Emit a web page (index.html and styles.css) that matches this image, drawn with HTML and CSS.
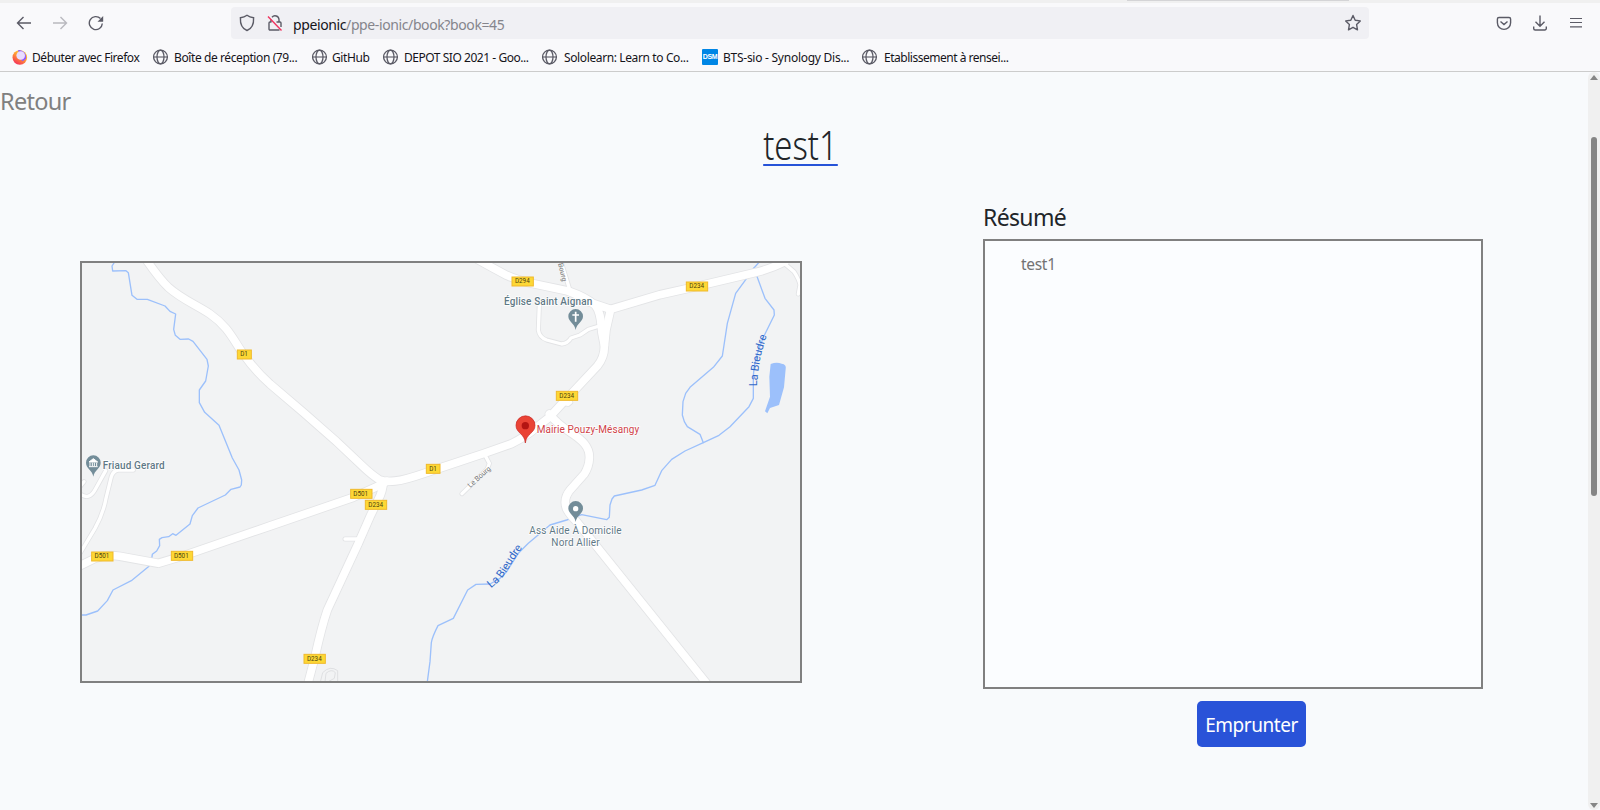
FILE: index.html
```html
<!DOCTYPE html>
<html lang="fr">
<head>
<meta charset="utf-8">
<title>test1</title>
<link rel="stylesheet" href="styles.css">
</head>
<body>
<svg class="defs" width="0" height="0">
  <symbol id="globe" viewBox="0 0 16 16"><g fill="none" stroke="#5b5b66" stroke-width="1.3"><circle cx="7.500" cy="8" r="6.9"/><ellipse cx="7.500" cy="8" rx="3.500" ry="6.9"/><path d="M.5 8h14" stroke-width="1.1"/></g></symbol>
</svg>
<div class="tabstrip"><div class="tab-edge"></div></div>
<header class="toolbar">
  <div class="nav">
    <svg width="16" height="16" viewBox="0 0 16 16"><path d="M15 8H1.5M7.5 2l-6 6 6 6" class="ink"/></svg>
    <svg class="faded" width="16" height="16" viewBox="0 0 16 16"><path d="M1 8h13.5M8.500 2l6 6-6 6" class="ink"/></svg>
    <svg width="16" height="16" viewBox="0 0 16 16"><path d="M14.300 8.500A6.500 6.500 0 1 1 12.500 3.600" class="ink"/><path d="M15.200 1v5.200a.5.5 0 0 1-.5.5H9.500z" fill="#5b5b66"/></svg>
  </div>
  <div class="urlbar">
    <svg width="16" height="18" viewBox="0 0 16 18"><path d="M8 1.300C10 2.800 12.500 3.500 14.600 3.700C14.900 9.500 13 14.500 8 16.500C3 14.500 1.100 9.500 1.400 3.700C3.500 3.500 6 2.800 8 1.300Z" class="ink"/></svg>
    <svg class="lock" width="16" height="18" viewBox="0 0 16 18"><path d="M4 8V5.500M5 3.200A4 4 0 0 1 12 5.500V8M9.500 8H13a1 1 0 0 1 1 1V13M12.500 16H3a1 1 0 0 1-1-1V9a1 1 0 0 1 1-1H4.500" class="ink"/><path d="M1 2.500L14.500 16.500" stroke="#f0325f" stroke-width="1.400"/></svg>
    <span class="url"><b>ppeionic</b>/ppe-ionic/book?book=45</span>
    <svg class="star" width="18" height="18" viewBox="0 0 18 18"><path d="M9 1.500L11.200 6.300L16.300 6.900L12.600 10.500L13.500 15.800L9 13.300L4.500 15.800L5.400 10.500L1.700 6.900L6.800 6.300Z" class="ink" stroke-linejoin="round"/></svg>
  </div>
  <div class="tools">
    <svg width="16" height="16" viewBox="0 0 16 16"><path d="M3 2.500h10a1.600 1.600 0 0 1 1.600 1.600V7.800a6.600 6.600 0 0 1-13.200 0V4.100A1.600 1.600 0 0 1 3 2.500ZM4.500 6.500L8 9.600L11.500 6.500" class="ink"/></svg>
    <svg width="16" height="16" viewBox="0 0 16 16"><path d="M8 .5V11M3.500 6.800L8 11.200l4.500-4.400M1.700 11.500v2a1.500 1.500 0 0 0 1.500 1.500h9.600a1.500 1.500 0 0 0 1.500-1.500v-2" class="ink"/></svg>
    <svg width="16" height="16" viewBox="0 0 16 16"><path d="M2 3.500h12M2 7.500h12M2 11.800h12" class="ink thin"/></svg>
  </div>
</header>
<nav class="bookmarks">
  <a class="bm w1"><svg width="16" height="16" viewBox="0 0 16 16"><defs><linearGradient id="ff" x1=".8" y1="0" x2=".2" y2="1"><stop offset="0" stop-color="#ffdf3c"/><stop offset=".45" stop-color="#ff9a35"/><stop offset="1" stop-color="#f5245d"/></linearGradient></defs><circle cx="7.800" cy="8.500" r="7.300" fill="url(#ff)"/><path d="M6 1.200a7 7 0 0 1 8 8a6 6 0 0 1-4 3z" fill="#9059ff"/><circle cx="8.700" cy="6.500" r="4.300" fill="#e9dcff"/></svg><span>Débuter avec Firefox</span></a>
  <a class="bm w2"><svg width="16" height="16"><use href="#globe"/></svg><span>Boîte de réception (79...</span></a>
  <a class="bm w3"><svg width="16" height="16"><use href="#globe"/></svg><span>GitHub</span></a>
  <a class="bm w4"><svg width="16" height="16"><use href="#globe"/></svg><span>DEPOT SIO 2021 - Goo...</span></a>
  <a class="bm w5"><svg width="16" height="16"><use href="#globe"/></svg><span>Sololearn: Learn to Co...</span></a>
  <a class="bm w6"><i class="dsm">DSM</i><span>BTS-sio - Synology Dis...</span></a>
  <a class="bm w7"><svg width="16" height="16"><use href="#globe"/></svg><span>Etablissement à rensei...</span></a>
</nav>
<div class="viewport">
  <main class="page">
    <a class="back">Retour</a>
    <h1 class="title"><span>test1</span></h1>
    <div class="columns">
      <svg class="map" viewBox="36 39 2154 1254">
        <defs>
          <g id="wide">
            <path d="M228 28C250 60 270 88 295 112C335 148 380 165 420 192C475 230 490 270 520 312C545 348 570 375 600 402L700 487L800 575L875 646Q905 675 928 689Q945 697 975 693C1020 688 1060 669 1110 654L1240 611L1325 581Q1370 558 1400 532L1440 500L1475 462L1510 425L1582 348Q1603 322 1603 290L1608 240L1622 178L1770 134L1860 114L1990 83L2050 69Q2100 58 2145 35"/>
            <path d="M1220 27Q1270 55 1310 76Q1340 90 1380 99L1490 122Q1530 137 1560 157L1622 178M1500 125Q1545 140 1575 165C1596 190 1592 225 1596 250L1603 285"/>
            <path d="M1438 492Q1465 525 1500 546C1540 572 1560 592 1558 625Q1557 650 1543 672L1502 718C1485 738 1482 758 1490 777Q1498 793 1520 815L1910 1300"/>
            <path d="M25 950L75 925Q110 912 150 919L265 940L335 919L600 828L850 742L925 708L950 694"/>
            <path d="M940 695Q938 725 925 748L900 800L865 880L772 1080Q755 1130 735 1220L714 1300"/>
          </g>
          <g id="narrow">
            <path d="M1470 25L1502 128M1408 165L1405 240Q1408 262 1430 270L1475 282Q1494 280 1503 264L1530 255L1555 238L1588 228"/>
            <path d="M1243 612L1258 640L1252 657L1176 731M1478 460L1495 463L1502 457M868 867H825M30 732Q58 752 76 718L107 662M30 910L75 835Q100 790 108 745L124 680Q130 662 145 660H190M30 710L42 695M2145 42L2172 65Q2188 90 2190 105L2185 132"/>
          </g>
          <path id="riverNameA" d="M2062 447V400Q2063 355 2077 300L2095 240"/>
          <path id="riverNameB" d="M1263 1015L1292 990Q1309 968 1328 935L1371 873"/>
        </defs>
        <rect x="36" y="39" width="2154" height="1254" fill="#f2f3f4"/>
        <g fill="none" stroke-linejoin="round" stroke-linecap="round">
          <g stroke="#9cc0fb" stroke-width="4">
            <path d="M132 39L126 48L128 63L168 62L175 68L186 136L201 148H232L285 168L300 184L317 192L311 238L316 256L330 268L356 267L369 274L411 328L415 348L407 393L388 420V458L404 487L447 526L487 624L507 660L515 690L514 705L510 711L483 718L466 735L384 774L367 797L360 822L318 856L308 851L296 860L276 863L268 868L269 887L260 903L247 913L245 927L237 949L184 992L129 1020L112 1052L83 1083L48 1095H30"/>
            <path d="M2067 37L2052 54L2025 92L1997 130L1972 220L1957 318L1930 352L1860 412L1847 430L1839 455L1837 495L1843 515L1852 530L1890 553L1900 578"/>
            <path d="M2052 54L2063 85L2085 145L2112 180L2113 195L2082 258Q2050 330 2050 380V445L2037 470L1980 530L1947 556L1900 578L1845 603L1805 628L1775 662L1755 706L1715 720L1633 738L1626 747L1620 765L1618 802L1610 809L1535 794L1490 810L1440 825L1375 880L1345 910L1310 965L1290 985L1260 1002L1218 1003L1193 1020L1150 1105L1104 1127Q1087 1160 1084 1178L1080 1235L1072 1295"/>
          </g>
          <use href="#narrow" stroke="#e2e3e5" stroke-width="15"/>
          <use href="#wide" stroke="#e3e4e6" stroke-width="28"/>
          <use href="#narrow" stroke="#fff" stroke-width="10"/>
          <use href="#wide" stroke="#fff" stroke-width="23"/>
          <path d="M750 1300L758 1268Q780 1245 803 1262L803 1300M765 1295L768 1270Q785 1255 796 1268L793 1285L775 1295" stroke="#dfe0e2" stroke-width="3"/>
        </g>
        <path d="M2102 342Q2120 335 2135 341Q2150 343 2147 357L2142 412L2127 465L2100 474L2092 490L2085 484L2100 440L2098 380Z" fill="#9cc0fb"/>
        <g class="shield">
          <rect x="502" y="300" width="42" height="27"/><rect x="1326" y="81" width="64" height="27"/><rect x="1849" y="96" width="64" height="27"/><rect x="1459" y="424" width="64" height="27"/><rect x="1069" y="643" width="41" height="27"/><rect x="842" y="718" width="64" height="27"/><rect x="886" y="751" width="64" height="27"/><rect x="304" y="904" width="64" height="27"/><rect x="65" y="906" width="64" height="27"/><rect x="702" y="1213" width="64" height="27"/>
        </g>
        <g class="shield-text">
          <text x="522" y="318">D1</text><text x="1357" y="100">D294</text><text x="1880" y="115">D234</text><text x="1490" y="443">D234</text><text x="1089" y="663">D1</text><text x="872" y="737">D501</text><text x="917" y="770">D234</text><text x="334" y="923">D501</text><text x="96" y="925">D501</text><text x="733" y="1232">D234</text>
        </g>
        <g fill="#738d99">
          <path d="M70 680C67 660 48 655 48 638A22 22 0 0 1 92 638C92 655 73 660 70 680Z"/>
          <path d="M1517 240C1514 220 1495 216 1495 199A22 22 0 0 1 1539 199C1539 216 1520 220 1517 240Z"/>
          <path d="M1517 816C1514 796 1495 792 1495 775A22 22 0 0 1 1539 775C1539 792 1520 796 1517 816Z"/>
        </g>
        <circle cx="1517" cy="776" r="8" fill="#fff"/>
        <path d="M1517 185V215M1507 195H1527" stroke="#fff" stroke-width="5"/>
        <path d="M57 636L70 626L83 636ZM60 638V648M67 638V648M73 638V648M80 638V648M57 650H83" stroke="#fff" stroke-width="3" fill="#fff"/>
        <path d="M1366 579C1364 550 1338 550 1338 526A28.500 28.500 0 0 1 1395 526C1395 550 1369 550 1366 579Z" fill="#ea4335" stroke="#c5221f" stroke-width="2"/>
        <circle cx="1366" cy="527" r="11" fill="#b31412"/>
        <g class="place">
          <text x="98" y="657" textLength="186">Friaud Gerard</text>
          <text x="1302" y="164" textLength="265">Église Saint Aignan</text>
          <g class="light">
          <text x="1378" y="851" textLength="277">Ass Aide À Domicile</text>
          <text x="1444" y="888" textLength="145">Nord Allier</text>
          <text class="red" x="1400" y="549" textLength="308">Mairie Pouzy-Mésangy</text>
          </g>
        </g>
        <g class="river"><text><textPath href="#riverNameA" startOffset="38">La Bieudre</textPath></text><text><textPath href="#riverNameB">La Bieudre</textPath></text></g>
        <g class="street"><text transform="translate(1201 714) rotate(-42)" textLength="84">Le Bourg</text><text transform="translate(1464 41) rotate(76)" textLength="56">Bourg</text></g>
      </svg>
      <section class="summary">
        <h2>Résumé</h2>
        <div class="box">test1</div>
        <button class="borrow">Emprunter</button>
      </section>
    </div>
  </main>
  <div class="scrollbar"><i class="up"></i><i class="thumb"></i><i class="down"></i></div>
</div>
</body>
</html>
```
FILE: styles.css
```css
* { box-sizing: border-box; }
body { margin: 0; height: 810px; overflow: hidden; display: flex; flex-direction: column; background: #f8f9fc; font-family: "Noto Sans", "Open Sans", sans-serif; color: #212529; }
svg { display: block; flex: none; }
.defs { position: absolute; }
.ink { fill: none; stroke: #5b5b66; stroke-width: 1.4; }
.thin { stroke-width: 1.2; }
.tabstrip { height: 3px; background: #f0f0f0; }
.tab-edge { width: 222px; height: 1px; margin-left: 1127px; background: #d4d4d6; }
.toolbar { height: 40px; display: flex; align-items: center; background: #f9f9fb; }
.nav { width: 231px; padding-left: 16px; display: flex; gap: 20px; }
.faded { opacity: .4; }
.urlbar { width: 1138px; height: 32px; display: flex; align-items: center; background: #f0f0f4; border-radius: 4px; padding: 0 7px 0 8px; }
.lock { margin-left: 12px; }
.url { margin: 2px 0 0 10px; font-size: 14px; letter-spacing: -.39px; color: #85858c; white-space: nowrap; }
.url b { color: #15141a; font-weight: 400; }
.star { margin-left: auto; }
.tools { margin-left: 127px; display: flex; gap: 20px; }
.bookmarks { height: 29px; flex: none; padding: 0 0 0 12px; display: flex; align-items: center; background: #f9f9fb; border-bottom: 1px solid #ccc; }
.bm { display: flex; align-items: center; gap: 5px; font-size: 12px; letter-spacing: -.4px; color: #15141a; white-space: nowrap; }
.w1 { width: 141px; gap: 4px; letter-spacing: -.45px; }
.w2 { width: 159px; }
.w3 { width: 71px; gap: 4px; }
.w4 { width: 159px; letter-spacing: -.46px; }
.w5 { width: 160px; gap: 6px; letter-spacing: -.38px; }
.w6 { width: 160px; letter-spacing: -.26px; }
.w7 { gap: 6px; letter-spacing: -.48px; }
.dsm { width: 16px; height: 16px; border-radius: 1px; background: #0086e5; color: #fff; font: 700 7px/15px "Liberation Sans", sans-serif; text-align: center; letter-spacing: -.4px; }
.viewport { flex: 1; display: flex; min-height: 0; }
.page { flex: 1; background: #f8fafc; }
.back { display: block; height: 46px; padding-top: 13px; font-size: 23.500px; line-height: 32px; letter-spacing: -.7px; color: #808080; }
.title { margin: 0; height: 66px; padding: 2px 0 0 12px; text-align: center; font-size: 40px; font-weight: 300; line-height: 50px; }
.title span { display: inline-block; height: 46px; border-bottom: 2px solid #2653d8; white-space: nowrap; transform: scaleX(.82); }
.columns { display: flex; align-items: flex-start; padding-left: 80px; }
.map { width: 722px; height: 422px; margin-top: 77px; border: 2px solid #808080; }
.summary { width: 500px; margin-left: 181px; padding-top: 17px; }
.summary h2 { margin: 0; height: 38px; font-size: 23px; font-weight: 400; line-height: 32px; letter-spacing: -.65px; }
.box { height: 450px; border: 2px solid #808080; background: #fbfdff; padding: 11px 36px; font-size: 15.500px; line-height: 24px; letter-spacing: -.3px; color: #737373; }
.borrow { display: block; width: 109px; height: 46px; margin: 12px 0 0 214px; padding: 2px 0 0; border: 0; border-radius: 5px; background: #2953d8; color: #fff; font: 400 19px/44px "Noto Sans", sans-serif; letter-spacing: -.45px; }
.scrollbar { width: 12px; background: #f0f0f0; border-radius: 6px; display: flex; flex-direction: column; align-items: center; padding: 3px 0 2px; }
.up, .down { border: 4px solid transparent; border-top: 0; border-bottom: 5px solid #858585; }
.down { border-bottom: 0; border-top: 5px solid #858585; margin-top: auto; }
.thumb { width: 6px; height: 359px; margin-top: 57px; border-radius: 3px; background: #858585; }
.shield rect { fill: #fdd835; stroke: #f0b92c; stroke-width: 3; }
.shield-text text { font: 400 19px Roboto, sans-serif; fill: #4d430f; text-anchor: middle; }
.place text { font: 500 30px Roboto, sans-serif; fill: #5f7986; stroke: #fff; stroke-width: 4; paint-order: stroke; }
.place .light text { font-weight: 400; }
.place .light .red { fill: #cf4147; }
.river text { font: 400 33px Roboto, sans-serif; fill: #2f67c8; }
.street text { font: 400 21px Roboto, sans-serif; fill: #757575; }
```
